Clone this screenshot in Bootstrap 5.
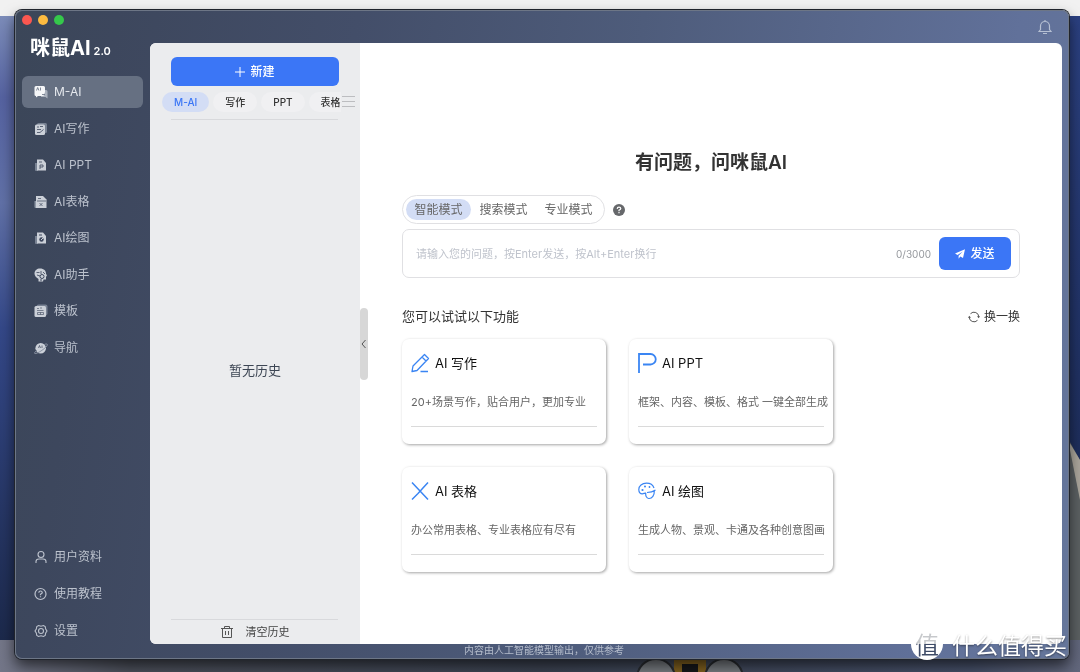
<!DOCTYPE html>
<html lang="zh-CN">
<head>
<meta charset="utf-8">
<meta name="viewport" content="width=device-width, initial-scale=1">
<title>咪鼠AI 2.0</title>
<link href="https://cdn.jsdelivr.net/npm/bootstrap@5.3.0/dist/css/bootstrap.min.css" rel="stylesheet">
<style>
  :root { --blue: #3b76f6; --pale: #d3ddf5; --line: #e0e0e3; }
  body {
    font-family: Inter, "Noto Sans CJK SC", sans-serif;
    font-size: 12px; line-height: 20px; color: #333;
    min-height: 100vh; padding: 10px 11px 13px 15px;
  }
  button { font-family: inherit; }
  svg { display: block; flex: none; }
  .wallpaper { position: fixed; inset: 0; width: 100%; height: 100%; z-index: -1; }
  .app-window {
    border-radius: 7px; position: relative;
    background: linear-gradient(98deg, #3b4658 0%, #3d475d 9%, #434e69 30%, #4e5c7b 55%, #61719a 88%, #65769a 100%);
    box-shadow: 0 0 0 1px #20242c, inset 0 0 0 1px #6d7686, 0 7px 14px #0009;
  }
  .sidebar { width: 135px; padding: 5px 7px 12px; color: #bcc2cd; }
  .lights { gap: 6px; }
  .lights span { width: 10px; height: 10px; border-radius: 50%; }
  .logo { color: #fff; font-size: 20px; font-weight: 700; line-height: 24px; margin: 11px 0 13px 8px; }
  .logo span { font-size: 11px; font-weight: 600; margin-left: 3px; }
  .side-main { height: 288px; }
  .side-foot { gap: 5px; }
  .side-link {
    height: 32px; padding-left: 12px; gap: 6px; border-radius: 6px;
    color: inherit; text-decoration: none; width: 121px;
  }
  .side-link.active { background: #667082; color: #e6e9ee; }
  .topbar { height: 33px; padding: 0 17px 0 0; color: #b6c0d3; }
  .plain-btn { border: 0; background: none; padding: 0; color: inherit; }
  .workspace { margin-right: 7px; border-radius: 6px; background: #fff; overflow: hidden; }
  .history { width: 210px; background: #ebecee; padding: 14px 0 1px; }
  .new-btn { margin: 0 21px; height: 29px; border-radius: 6px; background: var(--blue); color: #fff; gap: 5px; font-weight: 500; font-size: 12px; border: 0; }
  .tabs { margin: 6px 5px 7px 12px; height: 20px; }
  .tab-strip { gap: 4px; width: 180px; overflow: hidden; }
  .tab-strip button { border: 0; border-radius: 10px; background: #f0f0f2; color: #333; font-size: 10px; font-weight: 500; line-height: 20px; padding: 0 12px; flex: none; }
  .tab-strip button:last-child { padding-right: 0; border-radius: 10px 0 0 10px; }
  .tab-strip button.active { background: var(--pale); color: var(--blue); }
  .rule { margin: 0 22px 0 21px; border-top: 1px solid #d8d9dc; }
  .empty-note { font-size: 13px; color: #3d4654; }
  .clear-btn { font-size: 11px; gap: 13px; height: 23px; color: #444; }
  .collapse-btn { position: absolute; left: 0; top: 265px; width: 8px; height: 72px; border: 0; padding: 0; border-radius: 4px; background: #d7d7d7; color: #555; z-index: 2; }
  .content-area { padding: 106px 42px 20px; position: relative; }
  .headline { font-size: 19px; font-weight: 600; line-height: 28px; margin: 0 0 18px; }
  .modes { height: 29px; border: 1px solid var(--line); border-radius: 15px; padding: 3px; }
  .modes label { line-height: 22px; border-radius: 11px; color: #666; width: 65px; white-space: nowrap; font-size: 12px; text-align: center; cursor: pointer; }
  .modes input:checked + label { background: var(--pale); }
  .ask { height: 49px; margin-top: 5px; border: 1px solid var(--line); border-radius: 7px; padding: 0 8px 0 13px; }
  .ask input { border: 0; outline: 0; min-width: 0; font-size: 11px; padding: 0; background: none; color: #333; }
  .ask input::placeholder { color: #bfc3cc; opacity: 1; }
  .count { font-size: 10px; color: #96999e; margin-right: 8px; }
  .send { width: 72px; height: 33px; border: 0; border-radius: 6px; background: var(--blue); color: #fff; font-weight: 500; gap: 5px; }
  .section-head { margin-top: 29px; }
  .section-title { font-size: 13px; font-weight: 400; line-height: 18px; margin: 0; }
  .feature-grid { display: grid; grid-template-columns: repeat(auto-fill, 204px); gap: 23px; margin-top: 12px; }
  .feature { height: 105px; padding: 11px 9px 0; border-radius: 7px; background: #fff; color: #111; text-decoration: none; box-shadow: 1px 1px 3px #0000005c; }
  .feature h3 { font-size: 13px; font-weight: 400; line-height: 26px; margin: 0; }
  .feature p { font-size: 11px; color: #666; white-space: nowrap; line-height: 20px; margin: 16px 0 14px; }
  .feature hr { margin: 0; border-top: 1px solid #dadada; opacity: 1; }
  .notice { height: 15px; font-size: 10px; line-height: 13px; color: #b4bccb; }
  .notice span { margin-left: 314px; }
  .watermark { position: absolute; right: 2px; bottom: -2px; gap: 9px; color: #fff; font-family: "Noto Sans CJK SC", sans-serif; font-size: 23px; line-height: 34px; font-weight: 400; text-shadow: 0 1px 2px #0007; white-space: nowrap; z-index: 3; }
  .seal { width: 32px; height: 32px; border-radius: 50%; background: #fff; text-shadow: none; }
  .seal span { font-size: 24px; line-height: 32px; background: linear-gradient(#c6c8cb 50%, #3e4b67 50%); -webkit-background-clip: text; background-clip: text; color: transparent; }
</style>
</head>
<body class="d-flex">
<svg class="wallpaper" viewBox="0 0 1080 672" preserveAspectRatio="none" aria-hidden="true">
  <defs>
    <linearGradient id="sky" x2="0" y2="1"><stop offset="0" stop-color="#7c8cb9"/><stop offset=".13" stop-color="#5562a0"/><stop offset=".3" stop-color="#6070a6"/><stop offset=".5" stop-color="#344888"/><stop offset="1" stop-color="#1c294b"/></linearGradient>
    <linearGradient id="east" x2="0" y2="1"><stop offset="0" stop-color="#2b4080"/><stop offset="1" stop-color="#18264c"/></linearGradient>
    <linearGradient id="ground"><stop offset="0" stop-color="#737688"/><stop offset=".12" stop-color="#4c505b"/><stop offset=".5" stop-color="#3c4352"/><stop offset=".9" stop-color="#465069"/><stop offset="1" stop-color="#62677c"/></linearGradient>
  </defs>
  <rect width="1080" height="672" fill="#f1f1f1"/>
  <rect y="16" width="540" height="624" fill="url(#sky)"/>
  <rect x="540" y="16" width="540" height="624" fill="url(#east)"/>
  <path d="M1066 435l14 25v180h-14z" fill="#5b6062"/>
  <path d="M1068 440l12 20v40z" fill="#aaa59b"/>
  <rect y="640" width="1080" height="32" fill="url(#ground)"/>
  <path d="M674 659h32v13h-32z" fill="#80601f"/><path d="M682 664h16v8h-16z" fill="#16171a"/>
  <g fill="#777b80" stroke="#292c31" stroke-width="2"><circle cx="656" cy="678" r="19"/><circle cx="724" cy="678" r="19"/></g>
</svg>

<div class="app-window d-flex flex-fill">
  <aside class="sidebar d-flex flex-column flex-shrink-0">
    <div class="lights d-flex" aria-hidden="true"><span style="background:#fb5750"></span><span style="background:#fdbb40"></span><span style="background:#35c84b"></span></div>
    <div class="logo text-nowrap">咪鼠AI<span>2.0</span></div>
    <nav class="side-main d-flex flex-column justify-content-between" aria-label="功能">
      <a href="#" class="side-link active d-flex align-items-center" aria-current="page">
        <svg width="14" height="14" viewBox="0 0 14 14"><path d="M9 5h3a1.500 1.500 0 0 1 1.500 1.500v7L11.500 12H7V7z" fill="#aab1bd"/><path d="M2 1h7.500A1.500 1.500 0 0 1 11 2.500V7L9.500 11H4l-2 1.500V11A1.500 1.500 0 0 1 .5 9.500v-7A1.500 1.500 0 0 1 2 1z" fill="#f5f6f8"/><path d="M2.500 5.500l1.200-3 1.200 3M6.500 2.500v3M8 9.500h3" stroke="#667082" fill="none" stroke-width=".8"/></svg>M-AI</a>
      <a href="#" class="side-link d-flex align-items-center">
        <svg width="14" height="14" viewBox="0 0 14 14"><rect x="3" y="1" width="10" height="10" rx="1.500" fill="#788293"/><rect x="1" y="2.500" width="10" height="10.500" rx="1.500" fill="#cbd0d8"/><path d="M3 5h2M6 4.500h3M3 7.500h4M3 10.500h3l3.500-3" stroke="#3d475d" stroke-width=".8" fill="none"/></svg>AI写作</a>
      <a href="#" class="side-link d-flex align-items-center">
        <svg width="14" height="14" viewBox="0 0 14 14"><path d="M1 5h3v8H2a1 1 0 0 1-1-1z" fill="#788293"/><path d="M3 1.500h6L12 5v7.500H3z" fill="#cbd0d8"/><path d="M5 4h3M6 11V7h3v2H6" stroke="#3d475d" fill="none" stroke-width=".8"/></svg>AI PPT</a>
      <a href="#" class="side-link d-flex align-items-center">
        <svg width="14" height="14" viewBox="0 0 14 14"><path d="M.5 6h3v7h-2a1 1 0 0 1-1-1z" fill="#9099a7"/><path d="M2 1h7l3.500 3.500V13H2z" fill="#cbd0d8"/><path d="M4 3.500h3M3 6h9M5.500 8l3 3M8.500 8l-3 3" stroke="#3d475d" fill="none" stroke-width=".7"/></svg>AI表格</a>
      <a href="#" class="side-link d-flex align-items-center">
        <svg width="14" height="14" viewBox="0 0 14 14"><path d="M1 5h3v8H2a1 1 0 0 1-1-1z" fill="#788293"/><path d="M3 1.500h6L12 5v7.500H3z" fill="#cbd0d8"/><path d="M5 4h3" stroke="#3d475d"/><circle cx="7.500" cy="8.500" r="2.200" fill="#3d475d"/><path d="M7 9l3-3" stroke="#cbd0d8"/></svg>AI绘图</a>
      <a href="#" class="side-link d-flex align-items-center">
        <svg width="14" height="14" viewBox="0 0 14 14"><path d="M6 .5c4 0 6 2.500 6 5l1 2.500-1 .5v3H9.500l-.5 2H4.500V11C2 9.500.5 7.800.5 5.500.5 2.500 3 .5 6 .5z" fill="#cbd0d8"/><path d="M2.500 4.500h3M7 3v3M3 7l3 1M9 4l2 2" stroke="#3d475d" stroke-width=".8"/><circle cx="8" cy="8.500" r="2" fill="none" stroke="#3d475d"/><path d="M7 11v2" stroke="#3d475d"/></svg>AI助手</a>
      <a href="#" class="side-link d-flex align-items-center">
        <svg width="14" height="14" viewBox="0 0 14 14"><rect x="2.500" y=".5" width="11" height="11" rx="2" fill="#788293"/><rect x=".5" y="2" width="11.500" height="11" rx="1.500" fill="#cbd0d8"/><path d="M3 4.500h2M6 4h2M3 6.500h6.500M3.500 8.500h6v2h-6zM6.500 8.500v2" stroke="#3d475d" fill="none" stroke-width=".6"/></svg>模板</a>
      <a href="#" class="side-link d-flex align-items-center">
        <svg width="14" height="14" viewBox="0 0 14 14"><circle cx="6.700" cy="7.200" r="5.300" fill="#cbd0d8"/><path d="M3 9c-2 2-3 3-2.200 3.500C2.500 13.500 14 6 13.300 3.500 13 2.500 11.500 3 10.500 3.500" fill="none" stroke="#8a93a3"/><path d="M4.500 7l1-2.500 1 2.500M8 4.500V7" stroke="#3d475d" fill="none" stroke-width=".7"/></svg>导航</a>
    </nav>
    <nav class="side-foot d-flex flex-column mt-auto" aria-label="账户">
      <a href="#" class="side-link d-flex align-items-center">
        <svg width="14" height="14" viewBox="0 0 14 14" fill="none" stroke="currentColor" stroke-width="1.100"><circle cx="7" cy="4.500" r="3"/><path d="M2 13v-1.500Q2 9 5 9h4q3 0 3 2.500V13"/></svg>用户资料</a>
      <a href="#" class="side-link d-flex align-items-center">
        <svg width="14" height="14" viewBox="0 0 14 14" fill="none" stroke="currentColor" stroke-width="1.200"><circle cx="6.500" cy="7" r="5.500"/><path d="M4.800 5.700Q4.900 4 6.500 4t1.800 1.500Q8.300 6.500 6.500 7.300v1M6.500 9.200v1.100"/></svg>使用教程</a>
      <a href="#" class="side-link d-flex align-items-center">
        <svg width="14" height="14" viewBox="0 0 14 14" fill="none" stroke="currentColor" stroke-width="1.100"><path d="M4.500 1.500l2.500.7 2.500-.7 1.700 1L11.700 5 13 7l-1.300 2-.5 2.500-1.700 1L7 11.800l-2.500.7-1.700-1L2.300 9 1 7l1.300-2 .5-2.500z"/><circle cx="7" cy="7" r="2.500"/></svg>设置</a>
    </nav>
  </aside>

  <div class="d-flex flex-column flex-fill">
    <header class="topbar d-flex align-items-center justify-content-end">
      <button class="plain-btn" aria-label="通知"><svg width="14" height="16" viewBox="0 0 14 16" fill="none" stroke="currentColor" stroke-width="1.200"><path d="M1 12.500l1.500-2V7a4.500 4.500 0 0 1 9 0v3.500l1.500 2zM7 2.500V1M5 14.500h4"/></svg></button>
    </header>
    <div class="workspace d-flex flex-fill">
      <section class="history d-flex flex-column flex-shrink-0" aria-label="历史">
        <button class="new-btn d-flex align-items-center justify-content-center"><svg width="10" height="10" viewBox="0 0 10 10" stroke="#fff"><path d="M5 0v10M0 5h10"/></svg>新建</button>
        <div class="tabs d-flex align-items-center">
          <div class="tab-strip d-flex"><button class="active">M-AI</button><button>写作</button><button>PPT</button><button>表格</button></div>
          <button class="plain-btn ms-auto" aria-label="全部分类"><svg width="13" height="12" viewBox="0 0 13 12" stroke="#bcbdc0"><path d="M0 .5h13M0 5.500h13M0 10.500h13"/></svg></button>
        </div>
        <div class="rule"></div>
        <div class="empty-note flex-fill d-flex align-items-center justify-content-center">暂无历史</div>
        <div class="rule"></div>
        <button class="plain-btn clear-btn d-flex align-items-center justify-content-center"><svg width="12" height="12" viewBox="0 0 12 12" fill="none" stroke="#555" stroke-width="1"><path d="M0 2.500h12M3.500 2.500V.5h5v2M1.500 2.500v9h9v-9M4.500 5v4M7.500 5v4"/></svg>清空历史</button>
      </section>

      <main class="content-area flex-fill">
        <button class="collapse-btn" aria-label="收起"><svg width="8" height="10" viewBox="0 0 8 10" fill="none" stroke="currentColor"><path d="M5.500 1L2 5l3.500 4"/></svg></button>
        <h1 class="headline text-center">有问题，问咪鼠AI</h1>
        <div class="d-flex align-items-center">
          <div class="modes d-flex" role="radiogroup" aria-label="模式">
            <input class="btn-check" type="radio" name="mode" id="m1" checked><label for="m1">智能模式</label>
            <input class="btn-check" type="radio" name="mode" id="m2"><label for="m2">搜索模式</label>
            <input class="btn-check" type="radio" name="mode" id="m3"><label for="m3">专业模式</label>
          </div>
          <button class="plain-btn ms-2" aria-label="帮助"><svg width="12" height="12" viewBox="0 0 12 12"><circle cx="6" cy="6" r="6" fill="#66686b"/><path d="M4.200 4.900Q4.300 3.200 6 3.200t1.800 1.400Q7.800 5.500 6 6.200v1M6 8v1.200" stroke="#fff" stroke-width="1.200" fill="none"/></svg></button>
        </div>
        <form class="ask d-flex align-items-center" onsubmit="return false">
          <input class="flex-fill" type="text" maxlength="3000" aria-label="问题" placeholder="请输入您的问题，按Enter发送，按Alt+Enter换行">
          <span class="count">0/3000</span>
          <button class="send d-flex align-items-center justify-content-center"><svg width="10" height="10" viewBox="0 0 10 10" fill="#fff"><path d="M10 .3L0 4.600l2.500 1.500L7.800 2.500 3.600 6.800v3l1.700-2.200L8 9z"/></svg>发送</button>
        </form>
        <div class="section-head d-flex align-items-start justify-content-between">
          <h2 class="section-title">您可以试试以下功能</h2>
          <button class="plain-btn d-flex align-items-center gap-1"><svg width="12" height="12" viewBox="0 0 12 12" fill="none" stroke="#555"><path d="M2.500 2.700A4.800 4.800 0 0 1 10.800 6M9.500 9.300A4.800 4.800 0 0 1 1.200 6"/><path d="M9 5.200h3l-1.300 2zM0 6.800h3l-1.700-2z" fill="#555" stroke="none"/></svg>换一换</button>
        </div>
        <div class="feature-grid">
          <a href="#" class="feature">
            <div class="d-flex align-items-center gap-1"><svg width="20" height="20" viewBox="0 0 20 20" fill="none" stroke="#3a85f3" stroke-width="1.300" stroke-linejoin="round"><path d="M1 18.500l1-5.500L13.500 1.500l4 4L6 17.500zM11 4l4 4M9.500 18.500H17"/></svg><h3>AI 写作</h3></div>
            <p>20+场景写作，贴合用户，更加专业</p><hr></a>
          <a href="#" class="feature">
            <div class="d-flex align-items-center gap-1"><svg width="20" height="20" viewBox="0 0 20 20" fill="none" stroke="#3a85f3" stroke-width="1.800"><path d="M1 20V1h11.500a5.200 5.200 0 0 1 0 10.500H5"/></svg><h3>AI PPT</h3></div>
            <p>框架、内容、模板、格式 一键全部生成</p><hr></a>
          <a href="#" class="feature">
            <div class="d-flex align-items-center gap-1"><svg width="20" height="20" viewBox="0 0 20 20" fill="none" stroke="#3a85f3" stroke-width="1.500"><path d="M1 1.500l16 17M17 1.500L11.500 7.500M7 12.500L1 18.500M11.500 7.500L7 12.500"/></svg><h3>AI 表格</h3></div>
            <p>办公常用表格、专业表格应有尽有</p><hr></a>
          <a href="#" class="feature">
            <div class="d-flex align-items-center gap-1"><svg width="20" height="20" viewBox="0 0 20 20" fill="none" stroke="#3a85f3" stroke-width="1.200"><path d="M16 7C15 4 12 2.200 8.500 2.200 4 2.200.8 5 .8 8.500c0 3 1.500 4.300 3.500 4.300 1.700 0 2.200-1 3.700-.6M8 12.300c-1 2 .5 5 2.700 5.200 3.500.3 5.800-3.500 5.600-7.500M9 11.500q5 0 8.500-2.500"/><g fill="#3a85f3" stroke="none"><circle cx="4.500" cy="9" r="1.100"/><circle cx="7" cy="5.500" r="1"/><circle cx="11.500" cy="6" r=".9"/></g></svg><h3>AI 绘图</h3></div>
            <p>生成人物、景观、卡通及各种创意图画</p><hr></a>
        </div>
      </main>
    </div>
    <footer class="notice"><span>内容由人工智能模型输出，仅供参考</span></footer>
  </div>
  <div class="watermark d-flex align-items-center"><div class="seal d-flex justify-content-center"><span>值</span></div>什么值得买</div>
</div>
<script src="https://cdn.jsdelivr.net/npm/bootstrap@5.3.0/dist/js/bootstrap.bundle.min.js"></script>
</body>
</html>
